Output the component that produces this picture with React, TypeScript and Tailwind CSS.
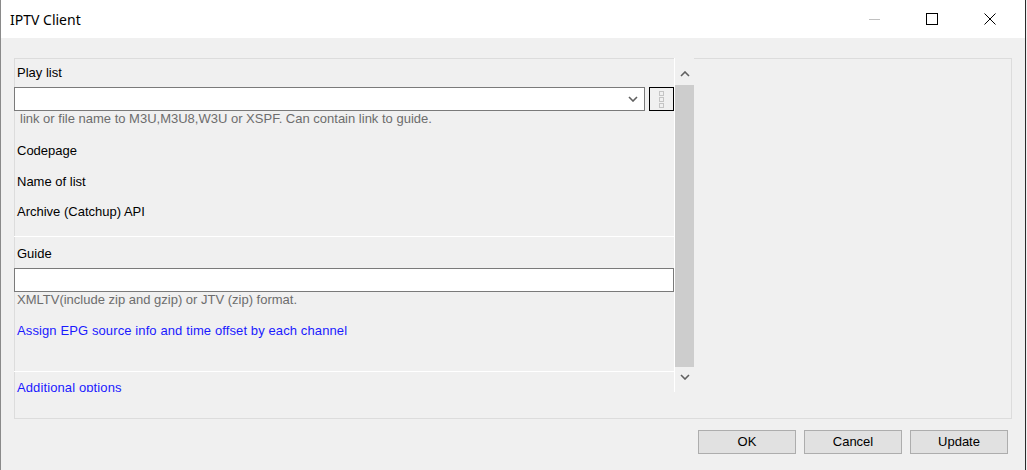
import React from "react";

const sans = { fontFamily: '"Liberation Sans", Arial, sans-serif' };

function Chevron({ up = false, className = "" }: { up?: boolean; className?: string }) {
  return (
    <svg width="10" height="6" viewBox="0 0 10 6" className={className}>
      <path
        d={up ? "M1 5 L5 1 L9 5" : "M1 1 L5 5 L9 1"}
        fill="none"
        stroke="#606060"
        strokeWidth="1.6"
      />
    </svg>
  );
}

function Label({ children, className = "" }: { children: React.ReactNode; className?: string }) {
  return <div className={`h-4 pl-[3px] text-[13px] leading-4 text-black ${className}`}>{children}</div>;
}

function Hint({ children, className = "" }: { children: React.ReactNode; className?: string }) {
  return <div className={`h-4 text-[13px] leading-4 text-[#6d6d6d] ${className}`}>{children}</div>;
}

export default function App() {
  return (
    <div className="h-[470px] w-[1027px] overflow-hidden bg-[#f0f0f0]" style={sans}>
      <div className="flex h-full w-[1026px] flex-col border-l border-r border-l-[#8a8a8a] border-r-[#2b2b2b]">
        {/* Title bar */}
        <div className="flex h-[38px] shrink-0 items-center bg-white">
          <span
            className="pl-[9px] text-[14px] text-black"
            style={{ fontFamily: '"Noto Sans", "Open Sans", sans-serif' }}
          >
            IPTV Client
          </span>
          <div className="ml-auto flex h-full items-center">
            <div className="flex h-full w-[46px] items-center justify-center">
              <div className="h-px w-[11px] bg-[#c0c0c0]" />
            </div>
            <div className="ml-[12px] flex h-full w-[46px] items-center justify-center">
              <div className="h-[12px] w-[12px] border border-black" />
            </div>
            <div className="ml-[12px] mr-[12px] flex h-full w-[46px] items-center justify-center">
              <svg width="12" height="12" viewBox="0 0 12 12">
                <path d="M0.5 0.5 L11.5 11.5 M11.5 0.5 L0.5 11.5" stroke="#000" strokeWidth="1" />
              </svg>
            </div>
          </div>
        </div>

        {/* Options panel */}
        <div className="ml-[13px] mt-[20px] h-[361px] w-[998px] border border-[#dcdcdc]">
          <div className="-ml-px -mt-px flex h-[334px] w-[681px] overflow-hidden">
            <div className="w-[660px] shrink-0">
              <Label className="mt-[7px]">Play list</Label>
              <div className="mt-[6px] flex items-center">
                <div className="flex h-[24px] w-[632px] items-center justify-end border border-[#7a7a7a] bg-white pr-[6px]">
                  <Chevron />
                </div>
                <div className="ml-[4px] flex h-[24px] w-[25px] flex-col items-center justify-center gap-[1px] border border-black bg-[#f0f0f0]">
                  <div className="h-[5px] w-[5px] border border-[#c4c4c4]" />
                  <div className="h-[5px] w-[5px] border border-[#c4c4c4]" />
                  <div className="h-[5px] w-[5px] border border-[#c4c4c4]" />
                </div>
              </div>
              <Hint className="pl-[6px]">link or file name to M3U,M3U8,W3U or XSPF. Can contain link to guide.</Hint>
              <Label className="mt-[16px]">Codepage</Label>
              <Label className="mt-[15px]">Name of list</Label>
              <Label className="mt-[14px]">Archive (Catchup) API</Label>
              <div className="mt-[16px] h-px w-full bg-white" />
              <Label className="mt-[9px]">Guide</Label>
              <div className="mt-[6px] h-[24px] w-full border border-[#7a7a7a] bg-white" />
              <Hint className="pl-[3px]">XMLTV(include zip and gzip) or JTV (zip) format.</Hint>
              <Label className="mt-[15px]">
                <span className="tracking-[0.11px] text-[#1a1aff]">
                  Assign EPG source info and time offset by each channel
                </span>
              </Label>
              <div className="mt-[32px] h-px w-full bg-white" />
              <Label className="mt-[8px]">
                <span className="tracking-[0.11px] text-[#1a1aff]">Additional options</span>
              </Label>
            </div>
            <div className="w-px shrink-0 bg-white" />
            <div className="flex w-[19px] shrink-0 flex-col bg-[#f0f0f0]">
              <div className="flex h-[27px] items-center justify-center pt-[4px]">
                <Chevron up />
              </div>
              <div className="h-[282px] bg-[#cdcdcd]" />
              <div className="flex h-[24px] items-center justify-center pb-[4px]">
                <Chevron />
              </div>
            </div>
          </div>
        </div>

        {/* Buttons */}
        <div className="mt-[11px] flex justify-end gap-[8px] pr-[17px]">
          {["OK", "Cancel", "Update"].map((t) => (
            <button
              key={t}
              className="h-[24px] w-[98px] border border-[#adadad] bg-[#e1e1e1] text-[13px] leading-4 text-black"
            >
              {t}
            </button>
          ))}
        </div>
      </div>
    </div>
  );
}
